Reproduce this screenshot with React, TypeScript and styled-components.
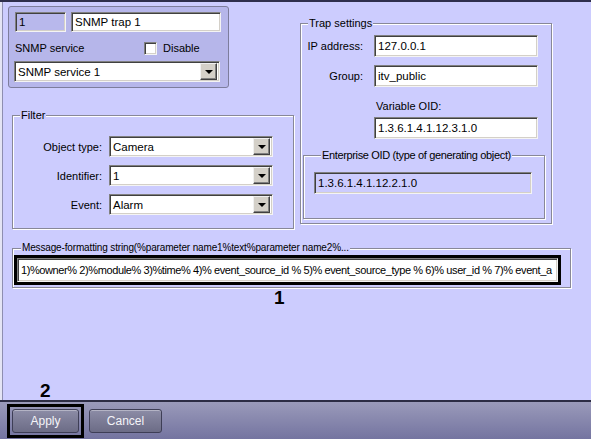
import React from "react";
import styled, { createGlobalStyle } from "styled-components";

const Global = createGlobalStyle`
  *, *::before, *::after { box-sizing: border-box; }
  html, body { margin: 0; padding: 0; }
  body {
    font-family: "Liberation Sans", Arial, sans-serif;
    font-size: 11px;
    background: #ccccfe;
  }
`;

const Screen = styled.div`
  width: 591px;
  height: 439px;
  display: flex;
  flex-direction: column;
  background: #ccccfe;
  border-top: 2px solid #2e2e4c;
  overflow: hidden;
  color: #000;
`;

const Main = styled.div`
  flex: 1;
  min-height: 0;
  margin-left: 2px;
  border-left: 1px solid #8e8eb0;
  box-shadow: -2px 0 0 #e4e4f4;
  padding: 4px 0 0 5px;
  display: flex;
  flex-direction: column;
`;

const TopRow = styled.div`
  display: flex;
  align-items: flex-start;
  gap: 5px;
`;

const LeftCol = styled.div`
  width: 287px;
  display: flex;
  flex-direction: column;
`;

const Card = styled.div`
  width: 221px;
  height: 82px;
  background: #b6b6ea;
  border: 1px solid #7d7d9c;
  border-radius: 3px;
  padding: 5px 6px;
  display: flex;
  flex-direction: column;
`;

const InputRow = styled.div`
  display: flex;
  gap: 5px;
`;

const Field = styled.div<{ $w: number; $h?: number; $bg?: string; $tight?: boolean }>`
  width: ${(p) => p.$w}px;
  min-width: ${(p) => p.$w}px;
  max-width: ${(p) => p.$w}px;
  flex: none;
  height: ${(p) => p.$h ?? 20}px;
  background: ${(p) => p.$bg ?? "#ffffff"};
  border-top: 1px solid #808080;
  border-left: 1px solid #808080;
  border-right: 1px solid #f4f4f4;
  border-bottom: 1px solid #f4f4f4;
  box-shadow: inset 1px 1px 0 #404040, inset -1px -1px 0 #d4d0c8;
  padding: 0 3px;
  display: flex;
  align-items: center;
  white-space: nowrap;
  overflow: hidden;
  font-size: ${(p) => (p.$tight ? "11px" : "11.5px")};
  letter-spacing: ${(p) => (p.$tight ? "-0.4px" : "0")};
`;

const ServiceRow = styled.div`
  height: 29px;
  padding-top: 3px;
  display: grid;
  grid-template-columns: 129px auto;
  align-items: center;
`;

const CheckLabel = styled.label`
  display: flex;
  align-items: center;
  gap: 6px;
`;

const CheckBox = styled.span`
  width: 13px;
  height: 13px;
  background: #fff;
  border-top: 1px solid #808080;
  border-left: 1px solid #808080;
  border-right: 1px solid #f4f4f4;
  border-bottom: 1px solid #f4f4f4;
  box-shadow: inset 1px 1px 0 #404040, inset -1px -1px 0 #d4d0c8;
`;

const SelectBox = styled(Field)`
  padding-right: 2px;
  justify-content: space-between;
`;

const DropBtn = styled.span`
  width: 17px;
  height: 17px;
  background: #d4d0c8;
  border-top: 1px solid #f0f0f0;
  border-left: 1px solid #f0f0f0;
  border-right: 1px solid #404040;
  border-bottom: 1px solid #404040;
  box-shadow: inset -1px -1px 0 #808080;
  display: flex;
  align-items: center;
  justify-content: center;
  flex-shrink: 0;
`;

const Arrow = styled.span`
  width: 0;
  height: 0;
  border-left: 4px solid transparent;
  border-right: 4px solid transparent;
  border-top: 4px solid #000;
  margin-top: 1px;
`;

const Group = styled.fieldset<{ $w: number; $h: number }>`
  width: ${(p) => p.$w}px;
  height: ${(p) => p.$h}px;
  margin: 0;
  padding: 0;
  border: 1px solid #888898;
  box-shadow: inset 1px 1px 0 #ffffff, 1px 1px 0 #ffffff;
  min-width: 0;
`;

const Legend = styled.legend<{ $size?: number; $ls?: number }>`
  margin-left: 7px;
  padding: 0 1px;
  font-size: ${(p) => p.$size ?? 11}px;
  letter-spacing: ${(p) => p.$ls ?? 0}px;
  background: #ccccfe;
  line-height: 12px;
  white-space: nowrap;
`;

const FilterGroup = styled(Group)`
  margin: 21px 0 0 4px;
  padding: 15px 0 0 0;
`;

const FormGrid = styled.div<{ $label: number; $gap: number; $row: number }>`
  display: grid;
  grid-template-columns: ${(p) => p.$label}px auto;
  column-gap: ${(p) => p.$gap}px;
  row-gap: ${(p) => p.$row}px;
  align-items: center;
`;

const RLabel = styled.span`
  text-align: right;
  white-space: nowrap;
`;

const TrapGroup = styled(Group)`
  margin-top: 11px;
  padding: 6px 0 0 0;
`;

const OidLabel = styled.div`
  margin: 13px 0 0 75px;
  height: 17px;
`;

const OidField = styled.div`
  margin-left: 73px;
`;

const EnterpriseGroup = styled(Group)`
  margin: 10px 0 0 2px;
  padding: 11px 0 0 10px;
`;

const MessageGroup = styled(Group)`
  margin: 13px 0 0 4px;
  padding: 1px 0 0 1px;
`;

const Highlight = styled.div<{ $pad: number }>`
  display: flex;
  width: fit-content;
  border: 3px solid #000;
  padding: ${(p) => p.$pad}px;
`;

const Marker = styled.div<{ $ml: number }>`
  margin-left: ${(p) => p.$ml}px;
  font-size: 19px;
  font-weight: bold;
  line-height: 19px;
  font-family: "Liberation Sans", Arial, sans-serif;
`;

const Spacer = styled.div`
  flex: 1;
`;

const Bar = styled.div`
  height: 39px;
  border-top: 2px solid #2c2c44;
  background: linear-gradient(#9a9aba, #7474a0);
  display: flex;
  align-items: center;
  gap: 5px;
  padding-left: 7px;
`;

const Button = styled.button<{ $w: number }>`
  width: ${(p) => p.$w}px;
  height: 24px;
  border: 1px solid #3e3e56;
  border-radius: 3px;
  background: linear-gradient(#8c8ca6, #6c6c86);
  box-shadow: inset 0 1px 0 rgba(255, 255, 255, 0.35);
  color: #f4f4f8;
  font-family: "Liberation Sans", Arial, sans-serif;
  font-size: 12px;
  padding: 0;
`;

const Select = ({ w, value }: { w: number; value: string }) => (
  <SelectBox $w={w} $h={21}>
    <span>{value}</span>
    <DropBtn>
      <Arrow />
    </DropBtn>
  </SelectBox>
);

export default function App() {
  return (
    <>
      <Global />
      <Screen>
        <Main>
          <TopRow>
            <LeftCol>
              <Card>
                <InputRow>
                  <Field $w={51} $bg="#b8b8ec">1</Field>
                  <Field $w={150}>SNMP trap 1</Field>
                </InputRow>
                <ServiceRow>
                  <span>SNMP service</span>
                  <CheckLabel>
                    <CheckBox />
                    Disable
                  </CheckLabel>
                </ServiceRow>
                <div style={{ marginLeft: -1 }}>
                  <Select w={206} value="SNMP service 1" />
                </div>
              </Card>
              <FilterGroup $w={282} $h={120}>
                <Legend>Filter</Legend>
                <FormGrid $label={89} $gap={7} $row={8}>
                  <RLabel>Object type:</RLabel>
                  <Select w={164} value="Camera" />
                  <RLabel>Identifier:</RLabel>
                  <Select w={164} value="1" />
                  <RLabel>Event:</RLabel>
                  <Select w={164} value="Alarm" />
                </FormGrid>
              </FilterGroup>
            </LeftCol>
            <TrapGroup $w={252} $h={207}>
              <Legend>Trap settings</Legend>
              <FormGrid $label={62} $gap={11} $row={8}>
                <RLabel>IP address:</RLabel>
                <Field $w={164} $h={22}>127.0.0.1</Field>
                <RLabel>Group:</RLabel>
                <Field $w={164} $h={22}>itv_public</Field>
              </FormGrid>
              <OidLabel>Variable OID:</OidLabel>
              <OidField>
                <Field $w={164} $h={22}>1.3.6.1.4.1.12.3.1.0</Field>
              </OidField>
              <EnterpriseGroup $w={242} $h={70}>
                <Legend $ls={-0.35}>Enterprise OID (type of generating object)</Legend>
                <Field $w={218} $h={22} $bg="#ccccfe">1.3.6.1.4.1.12.2.1.0</Field>
              </EnterpriseGroup>
            </TrapGroup>
          </TopRow>
          <MessageGroup $w={559} $h={46}>
            <Legend $size={10} $ls={-0.15}>
              Message-formatting string(%parameter name1%text%parameter name2%...
            </Legend>
            <Highlight $pad={0}>
              <Field $w={541} $h={24} $tight>
                1)%owner% 2)%module% 3)%time% 4)% event_source_id % 5)% event_source_type % 6)% user_id % 7)% event_a
              </Field>
            </Highlight>
          </MessageGroup>
          <Marker $ml={266}>1</Marker>
          <Spacer />
          <Marker $ml={32}>2</Marker>
        </Main>
        <Bar>
          <Highlight $pad={2}>
            <Button $w={67}>Apply</Button>
          </Highlight>
          <Button $w={73}>Cancel</Button>
        </Bar>
      </Screen>
    </>
  );
}
